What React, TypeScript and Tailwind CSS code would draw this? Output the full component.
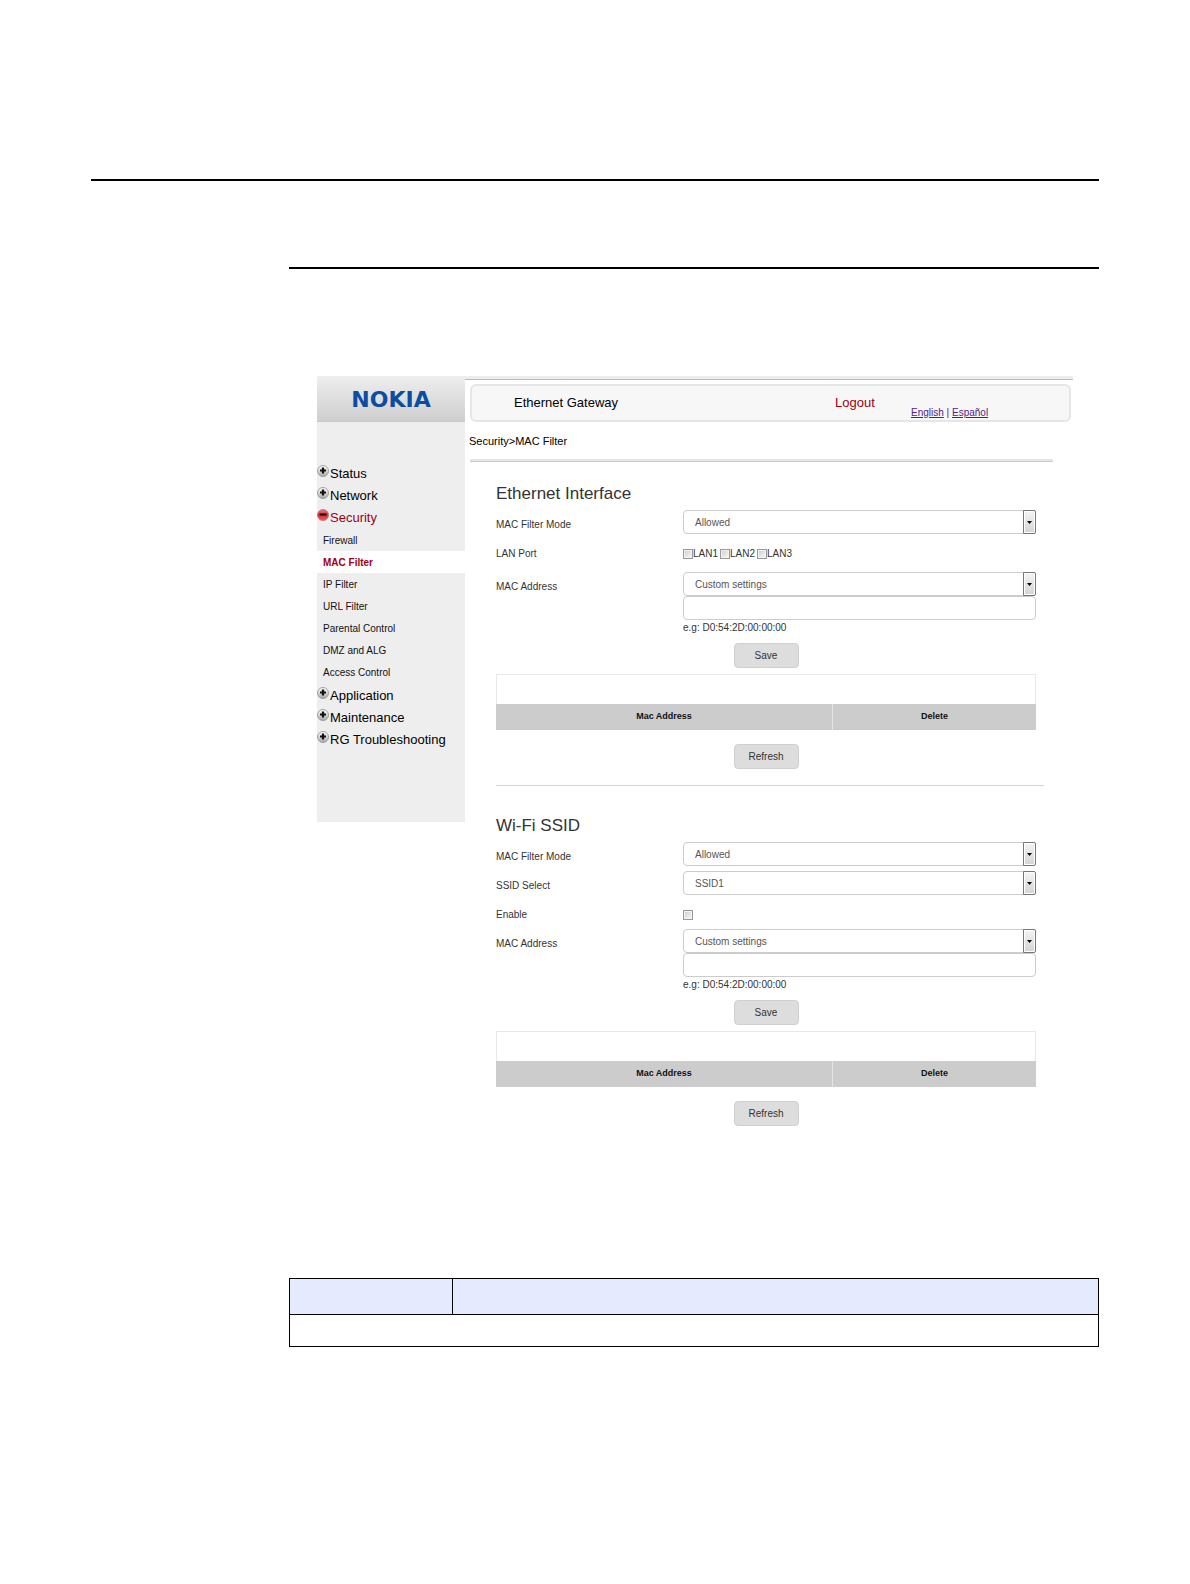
import { useId, useState } from 'react';

const MENU = [
  { label: 'Status' },
  { label: 'Network' },
  {
    label: 'Security',
    items: [
      'Firewall',
      'MAC Filter',
      'IP Filter',
      'URL Filter',
      'Parental Control',
      'DMZ and ALG',
      'Access Control',
    ],
  },
  { label: 'Application' },
  { label: 'Maintenance' },
  { label: 'RG Troubleshooting' },
];

function ToggleIcon({ open }: { open: boolean }) {
  return (
    <svg viewBox="0 0 12 12" className="mb-1.5 size-3 shrink-0" aria-hidden="true">
      <defs>
        <linearGradient id="icon-closed" x1="0" y1="0" x2="0" y2="1">
          <stop offset="0" stopColor="#ffffff" />
          <stop offset="0.5" stopColor="#d6d6d6" />
          <stop offset="1" stopColor="#a9a9a9" />
        </linearGradient>
        <linearGradient id="icon-open" x1="0" y1="0" x2="0" y2="1">
          <stop offset="0" stopColor="#d98a8a" />
          <stop offset="0.5" stopColor="#d22f35" />
          <stop offset="1" stopColor="#f0605e" />
        </linearGradient>
      </defs>
      <circle
        cx="6"
        cy="6"
        r="5.5"
        fill={open ? 'url(#icon-open)' : 'url(#icon-closed)'}
        stroke={open ? '#c46a6a' : '#8f8f8f'}
        strokeWidth="0.8"
      />
      <path
        d={open ? 'M2.5 5.5h7' : 'M3 5.5h6M6 2.5v6'}
        stroke={open ? '#3a0508' : '#111'}
        strokeWidth="2.2"
      />
    </svg>
  );
}

function Sidebar() {
  return (
    <aside className="w-[148px] shrink-0 self-start bg-[#eee] pb-[71px]">
      <div className="flex h-[46px] items-center justify-center border-b border-[#c8c8c8] bg-linear-to-b from-[#eee] to-[#cfcfcf] pt-0.5 font-['DejaVu_Sans',sans-serif] text-[22px] font-bold text-[#0b4da2]">
        NOKIA
      </div>
      <nav className="pt-[41px]">
        <ul>
          {MENU.map(({ label, items }) => (
            <li key={label}>
              <a
                href="#"
                className={`flex h-[22px] items-center text-[13px] ${items ? 'text-[#a00010]' : 'text-black'}`}
              >
                <ToggleIcon open={!!items} />
                <span className="ml-px">{label}</span>
              </a>
              {items && (
                <ul className="pb-0.5">
                  {items.map((item) => (
                    <li key={item}>
                      <a
                        href="#"
                        className={`flex h-[22px] items-center pl-1.5 text-[10px] ${
                          item === 'MAC Filter' ? 'bg-white font-bold text-[#a00010]' : 'text-[#111]'
                        }`}
                      >
                        {item}
                      </a>
                    </li>
                  ))}
                </ul>
              )}
            </li>
          ))}
        </ul>
      </nav>
    </aside>
  );
}

function SelectBox({ id, options }: { id: string; options: string[] }) {
  return (
    <div className="relative">
      <select
        id={id}
        className="block h-6 w-full appearance-none rounded-sm border border-[#ccc] bg-white pr-4 pl-[11px] text-[10px] text-[#555]"
      >
        {options.map((option) => (
          <option key={option}>{option}</option>
        ))}
      </select>
      <span className="pointer-events-none absolute inset-y-0 right-0 flex w-[13px] items-center justify-center rounded-r-xs border border-[#777] bg-linear-to-b from-[#f4f4f4] to-[#d4d4d4] shadow-[inset_0_0_0_1px_#fff]">
        <svg viewBox="0 0 5 3" className="h-[3px] w-[5px]" aria-hidden="true">
          <path d="M0 0h5L2.5 3z" fill="#000" />
        </svg>
      </span>
    </div>
  );
}

const checkboxClass =
  'size-[10px] appearance-none border border-[#999] bg-linear-to-br from-[#ccc] to-[#fafafa] shadow-[inset_0_0_0_1px_#f2f2f2] checked:bg-[#555]';

function Row({ label, htmlFor, children }: { label: string; htmlFor?: string; children: React.ReactNode }) {
  return (
    <div className="grid min-h-[29px] grid-cols-[187px_1fr] items-start">
      <label htmlFor={htmlFor} className="leading-[29px]">
        {label}
      </label>
      {children}
    </div>
  );
}

function MacAddressRow() {
  const id = useId();
  const [mac, setMac] = useState('');
  return (
    <Row label="MAC Address" htmlFor={id}>
      <div>
        <SelectBox id={id} options={['Custom settings']} />
        <input
          type="text"
          aria-label="Custom MAC address"
          value={mac}
          onChange={(e) => setMac(e.target.value)}
          className="block h-6 w-full rounded-sm border border-[#ccc] bg-white px-3 text-[10px] text-[#555]"
        />
        <p className="leading-[15px]">e.g: D0:54:2D:00:00:00</p>
      </div>
    </Row>
  );
}

function FormButton({ children }: { children: string }) {
  return (
    <button
      type="button"
      className="mx-auto block h-[25px] w-[65px] rounded-sm border border-[#d0d0d0] bg-[#ddd] text-[10px] text-[#333]"
    >
      {children}
    </button>
  );
}

function MacTable() {
  return (
    <table className="mt-1.5 mb-3.5 w-full table-fixed border-separate border-spacing-0 text-[#111]">
      <colgroup>
        <col className="w-[337px]" />
        <col />
      </colgroup>
      <tbody>
        <tr>
          <td colSpan={2} className="h-[30px] border border-b-0 border-[#e8e8e8]" />
        </tr>
        <tr className="bg-[#ccc]">
          <th scope="col" className="h-[26px] border-r border-[#e4e4e4] p-0 text-[9px]">
            Mac Address
          </th>
          <th scope="col" className="p-0 text-[9px]">
            Delete
          </th>
        </tr>
      </tbody>
    </table>
  );
}

function EthernetSection() {
  return (
    <section>
      <h2 className="mb-px text-[17px] leading-[30px]">Ethernet Interface</h2>
      <Row label="MAC Filter Mode" htmlFor="eth-mode">
        <SelectBox id="eth-mode" options={['Allowed', 'Blocked']} />
      </Row>
      <div className="mb-1">
        <Row label="LAN Port">
          <div className="flex h-[29px] items-center gap-0.5">
            {['LAN1', 'LAN2', 'LAN3'].map((port) => (
              <label key={port} className="flex items-center">
                <input type="checkbox" className={checkboxClass} />
                {port}
              </label>
            ))}
          </div>
        </Row>
      </div>
      <MacAddressRow />
      <div className="pt-2">
        <FormButton>Save</FormButton>
      </div>
      <MacTable />
      <FormButton>Refresh</FormButton>
    </section>
  );
}

function WifiSection() {
  return (
    <section>
      <h2 className="mb-px text-[17px] leading-[30px]">Wi-Fi SSID</h2>
      <Row label="MAC Filter Mode" htmlFor="wifi-mode">
        <SelectBox id="wifi-mode" options={['Allowed', 'Blocked']} />
      </Row>
      <Row label="SSID Select" htmlFor="wifi-ssid">
        <SelectBox id="wifi-ssid" options={['SSID1', 'SSID2']} />
      </Row>
      <Row label="Enable" htmlFor="wifi-enable">
        <div className="flex h-[29px] items-center">
          <input id="wifi-enable" type="checkbox" className={checkboxClass} />
        </div>
      </Row>
      <MacAddressRow />
      <div className="pt-2">
        <FormButton>Save</FormButton>
      </div>
      <MacTable />
      <FormButton>Refresh</FormButton>
    </section>
  );
}

function Gateway() {
  return (
    <div className="mt-[107px] mr-[26px] ml-7 flex">
      <Sidebar />
      <main className="min-w-0 flex-1">
        <div className="h-1 border-b border-[#bbb] bg-[#eee]" />
        <header className="mt-1 mr-0.5 ml-[5px] flex h-[38px] items-center rounded-md border-2 border-[#e6e6e6] bg-[#f7f7f7] pl-[42px] text-[13px] text-black">
          <h1 className="w-[321px]">Ethernet Gateway</h1>
          <a href="#" className="w-[76px] text-[#a00010]">
            Logout
          </a>
          <p className="self-end text-[10px] leading-[15px] text-[#551a8b]">
            <a href="#" className="underline">
              English
            </a>{' '}
            |{' '}
            <a href="#" className="underline">
              Español
            </a>
          </p>
        </header>
        <p className="ml-1 pt-px text-[11px] leading-9 text-black">Security&gt;MAC Filter</p>
        <div className="mr-5 ml-[5px] h-[3px] border-b border-[#ccc] bg-[#e4e4e4]" />
        <div className="pt-[17px] pr-[37px] pl-[31px] text-[10px] text-[#333]">
          <EthernetSection />
          <hr className="mt-4 mb-[25px] -mr-2 border-[#d5d5df]" />
          <WifiSection />
        </div>
      </main>
    </div>
  );
}

export default function App() {
  return (
    <div className="min-h-screen bg-white px-[91px] pt-[179px] pb-20 font-['Liberation_Sans',Arial,sans-serif]">
      <hr className="border-t-2 border-black" />
      <div className="ml-[198px] pt-[86px]">
        <hr className="border-t-2 border-black" />
        <Gateway />
        <table className="mt-[152px] w-full table-fixed border-collapse">
          <tbody>
            <tr className="bg-[#e5eaff]">
              <td className="h-9 w-[163px] border border-black" />
              <td className="border border-black" />
            </tr>
            <tr>
              <td colSpan={2} className="h-8 border border-black" />
            </tr>
          </tbody>
        </table>
      </div>
    </div>
  );
}
